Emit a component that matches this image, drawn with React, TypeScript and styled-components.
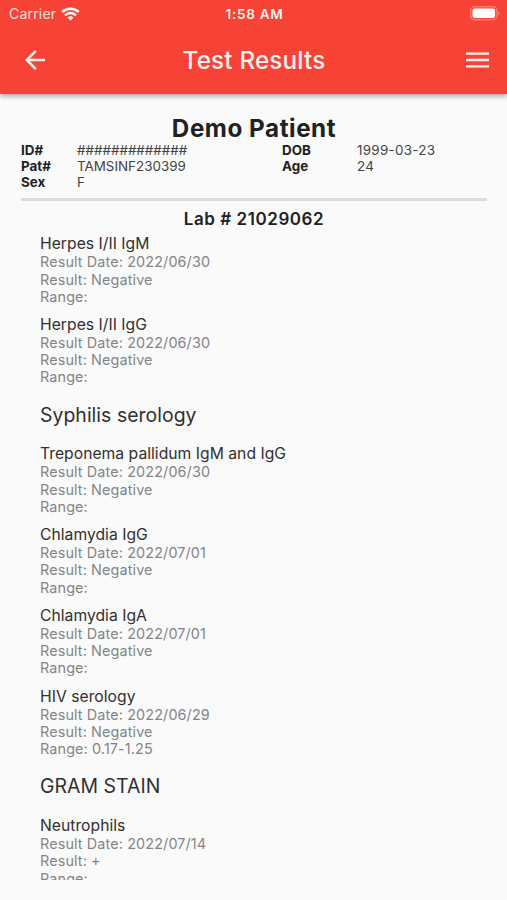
import React from "react";
import styled, { createGlobalStyle } from "styled-components";

const GlobalStyle = createGlobalStyle`
  * { box-sizing: border-box; }
  body {
    margin: 0;
    background: #fafafa;
    font-family: Inter, "Liberation Sans", sans-serif;
    color: #212121;
  }
`;

const Screen = styled.div`
  display: flex;
  flex-direction: column;
  width: 507px;
  height: 900px;
  overflow: hidden;
  background: #fafafa;
`;

const Header = styled.header`
  flex: none;
  height: 94px;
  background: #f64336;
  color: #fff;
  box-shadow: 0 2px 5px rgba(0, 0, 0, 0.36);
  z-index: 1;
`;

const StatusBar = styled.div`
  display: grid;
  grid-template-columns: 1fr auto 1fr;
  align-items: center;
  height: 26px;
  padding: 1px 7px 0 9px;
`;

const Carrier = styled.div`
  display: flex;
  align-items: center;
  gap: 5px;
  font-size: 14px;
  letter-spacing: 0.2px;
  color: #ffe1df;
`;

const Clock = styled.div`
  font-size: 13.6px;
  font-weight: 600;
  letter-spacing: 0.7px;
  color: #fff0ee;
`;

const BatterySlot = styled.div`
  display: flex;
  justify-content: flex-end;
`;

const Toolbar = styled.div`
  display: grid;
  grid-template-columns: 60px 1fr 60px;
  align-items: center;
  height: 67px;
  padding: 0 18px 0 20px;
`;

const IconButton = styled.button<{ $align: "start" | "end" }>`
  display: flex;
  justify-content: ${(p) => (p.$align === "start" ? "flex-start" : "flex-end")};
  padding: 0;
  border: 0;
  background: none;
  color: #fff2f0;
`;

const Title = styled.h1`
  margin: 0;
  padding: 1px 1px 0 0;
  font-size: 24.2px;
  font-weight: 500;
  letter-spacing: 0.2px;
  text-align: center;
  color: #fff2f0;
`;

const Content = styled.main`
  display: flex;
  flex-direction: column;
  height: 786px;
  padding: 21px 20px 0 21px;
  overflow: hidden;
`;

const PatientName = styled.h2`
  margin: 0 0 -1px;
  font-size: 24.2px;
  line-height: 28px;
  font-weight: 650;
  letter-spacing: 0.55px;
  text-align: center;
`;

const PatientGrid = styled.dl`
  display: grid;
  grid-template-columns: 56px 205px 75px 1fr;
  grid-auto-rows: 16px;
  align-items: center;
  margin: 0;
  font-size: 13.4px;
  line-height: 16px;
`;

const Label = styled.dt`
  font-weight: 700;
`;

const Value = styled.dd<{ $numeric?: boolean }>`
  margin: 0;
  letter-spacing: ${(p) => (p.$numeric ? "0.3px" : "0")};
  color: #424242;
`;

const Divider = styled.hr`
  flex: none;
  width: 100%;
  height: 3px;
  margin: 8px 0 0;
  border: 0;
  background: #dcdcdc;
`;

const LabNumber = styled.h3`
  margin: 7px 0 -1px;
  font-size: 17px;
  line-height: 22.4px;
  font-weight: 600;
  letter-spacing: 0.55px;
  text-align: center;
`;

const Results = styled.section`
  padding-left: 19px;
`;

const Item = styled.article`
  padding: 4.9px 0 5.05px;
`;

const ItemTitle = styled.h5`
  margin: 0;
  font-size: 15.7px;
  line-height: 19px;
  font-weight: 400;
  letter-spacing: 0.02px;
  color: #303030;
`;

const Detail = styled.p`
  margin: 0;
  font-size: 14.4px;
  line-height: 17.25px;
  letter-spacing: 0.12px;
  color: #858585;
`;

const SectionTitle = styled.h4`
  margin: 0;
  font-size: 19.4px;
  line-height: 48.8px;
  font-weight: 400;
  letter-spacing: 0.05px;
  color: #303030;
`;

type Test = { name: string; date: string; result: string; range?: string };
type Group = { heading?: string; tests: Test[] };

const groups: Group[] = [
  {
    tests: [
      { name: "Herpes I/II IgM", date: "2022/06/30", result: "Negative" },
      { name: "Herpes I/II IgG", date: "2022/06/30", result: "Negative" },
    ],
  },
  {
    heading: "Syphilis serology",
    tests: [
      { name: "Treponema pallidum IgM and IgG", date: "2022/06/30", result: "Negative" },
      { name: "Chlamydia IgG", date: "2022/07/01", result: "Negative" },
      { name: "Chlamydia IgA", date: "2022/07/01", result: "Negative" },
      { name: "HIV serology", date: "2022/06/29", result: "Negative", range: "0.17-1.25" },
    ],
  },
  {
    heading: "GRAM STAIN",
    tests: [{ name: "Neutrophils", date: "2022/07/14", result: "+" }],
  },
];

const WifiIcon = () => (
  <svg width="19" height="14" viewBox="0 0 19 14" fill="none" stroke="#fff" strokeWidth="2.5">
    <path d="M1.2 5.2a11.8 11.8 0 0 1 16.6 0" />
    <path d="M4.1 8.3a7.6 7.6 0 0 1 10.8 0" />
    <path d="M9.5 13.6 6.6 10.7a4.1 4.1 0 0 1 5.8 0z" fill="#fff" stroke="none" />
  </svg>
);

const BatteryIcon = () => (
  <svg width="30" height="15" viewBox="0 0 30 15">
    <rect x="0.7" y="0.8" width="26.2" height="13" rx="4" fill="none" stroke="#f9796f" strokeWidth="1.5" />
    <rect x="2.5" y="2.6" width="22.6" height="9.4" rx="2.2" fill="#fff" />
    <path d="M28.1 5.2c2 .7 2 3.5 0 4.2z" fill="#f9796f" />
  </svg>
);

const BackIcon = () => (
  <svg width="30" height="30" viewBox="0 0 24 24" fill="currentColor">
    <path d="M20 11H7.83l5.59-5.59L12 4l-8 8 8 8 1.41-1.41L7.83 13H20z" />
  </svg>
);

const MenuIcon = () => (
  <svg width="23" height="16" viewBox="0 0 23 16" fill="currentColor">
    <path d="M0 0.4h23v2.4H0zM0 6.8h23v2.4H0zM0 13.2h23v2.4H0z" />
  </svg>
);

export default function App() {
  return (
    <Screen>
      <GlobalStyle />
      <Header>
        <StatusBar>
          <Carrier>
            Carrier
            <WifiIcon />
          </Carrier>
          <Clock>1:58 AM</Clock>
          <BatterySlot>
            <BatteryIcon />
          </BatterySlot>
        </StatusBar>
        <Toolbar>
          <IconButton $align="start" aria-label="Back">
            <BackIcon />
          </IconButton>
          <Title>Test Results</Title>
          <IconButton $align="end" aria-label="Menu">
            <MenuIcon />
          </IconButton>
        </Toolbar>
      </Header>
      <Content>
        <PatientName>Demo Patient</PatientName>
        <PatientGrid>
          <Label>ID#</Label>
          <Value>#############</Value>
          <Label>DOB</Label>
          <Value $numeric>1999-03-23</Value>
          <Label>Pat#</Label>
          <Value>TAMSINF230399</Value>
          <Label>Age</Label>
          <Value $numeric>24</Value>
          <Label>Sex</Label>
          <Value>F</Value>
        </PatientGrid>
        <Divider />
        <LabNumber>Lab # 21029062</LabNumber>
        <Results>
          {groups.map((group, i) => (
            <React.Fragment key={i}>
              {group.heading && <SectionTitle>{group.heading}</SectionTitle>}
              {group.tests.map((test) => (
                <Item key={test.name}>
                  <ItemTitle>{test.name}</ItemTitle>
                  <Detail>Result Date: {test.date}</Detail>
                  <Detail>Result: {test.result}</Detail>
                  <Detail>Range: {test.range}</Detail>
                </Item>
              ))}
            </React.Fragment>
          ))}
        </Results>
      </Content>
    </Screen>
  );
}
